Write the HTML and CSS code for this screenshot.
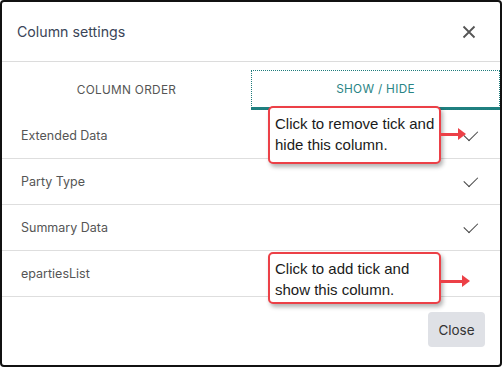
FILE: index.html
```
<!DOCTYPE html>
<html lang="en">
<head>
  <meta charset="UTF-8">
  <title>Column settings</title>
  <link rel="stylesheet" href="styles.css">
</head>
<body>
  <div class="dialog">
    <header class="dlg-head">
      <h1>Column settings</h1>
      <button class="x-btn" aria-label="Close">
        <svg width="14" height="14" viewBox="0 0 14 14"><path d="M1.5 1.5l11 11M12.5 1.5l-11 11" stroke="#555" stroke-width="1.8" fill="none"/></svg>
      </button>
    </header>

    <div class="tabs">
      <div class="tab">COLUMN ORDER</div>
      <div class="tab active">SHOW / HIDE</div>
    </div>

    <ul class="cols">
      <li>Extended Data <span class="tick"></span></li>
      <li>Party Type <span class="tick"></span></li>
      <li>Summary Data <span class="tick"></span></li>
      <li>epartiesList</li>
    </ul>

    <footer class="dlg-foot">
      <button class="close-btn">Close</button>
    </footer>

    <!-- annotation callouts -->
    <div class="callout c1">
      <p>Click to remove tick and<br>hide this column.</p>
      <span class="arrow"></span>
    </div>
    <div class="callout c2">
      <p>Click to add tick and<br>show this column.</p>
      <span class="arrow"></span>
    </div>
  </div>
</body>
</html>
```
FILE: styles.css
```
* { margin: 0; padding: 0; box-sizing: border-box; }
body { font-family: 'Inter', sans-serif; background: #fff; }

.dialog { position: relative; width: 502px; height: 367px; border: 2px solid #111; border-radius: 4px; background: #fff; display: flex; flex-direction: column; }

.dlg-head { height: 60px; border-bottom: 1px solid #dcdcdc; display: flex; align-items: center; justify-content: space-between; padding: 0 24px 0 15px; }
.dlg-head h1 { font-size: 14.2px; font-weight: 400; color: #3b4558; }
.x-btn { background: none; border: none; display: flex; cursor: pointer; }

.tabs { display: flex; padding-top: 8px; }
.tab { flex: 1; height: 40px; display: flex; align-items: center; justify-content: center; font-size: 11.8px; color: #555; letter-spacing: 0.3px; }
.tab.active { color: #2a8585; outline: 1px dotted #1e7b7b; outline-offset: -1px; border-bottom: 3px solid #1f8080; }

.cols { list-style: none; margin-top: 3px; }
.cols li { height: 46px; border-bottom: 1px solid #dedede; display: flex; align-items: center; justify-content: space-between; padding: 0 22px 0 19px; font-size: 12.5px; color: #555; }
.tick { width: 13px; height: 8px; border-left: 1.6px solid #444; border-bottom: 1.6px solid #444; transform: rotate(-45deg) translate(1px, -2px); }

.dlg-foot { display: flex; justify-content: flex-end; padding: 15px 15px 0 0; }
.close-btn { width: 57px; height: 35px; background: #dfe1e6; border: none; border-radius: 4px; font-family: 'Inter', sans-serif; font-size: 13.5px; color: #333; }

.callout { position: absolute; left: 266px; width: 173px; border: 2px solid #ec4047; border-radius: 5px; background: #fff; box-shadow: 2px 3px 4px rgba(0,0,0,0.3); padding: 3px 5px; }
.callout p { font-family: 'Liberation Sans', Arial, sans-serif; font-size: 15px; line-height: 21px; color: #1a1a1a; white-space: nowrap; }
.c1 { top: 104px; height: 58px; padding-top: 5px; }
.c2 { top: 250px; height: 52px; padding-top: 4px; }
.arrow { position: absolute; left: 171px; top: 25px; width: 18px; height: 3px; background: #ec4047; }
.arrow::after { content: ''; position: absolute; right: -7px; top: -5px; border-left: 8px solid #ec4047; border-top: 6.5px solid transparent; border-bottom: 6.5px solid transparent; }
.c2 .arrow { top: 26px; width: 22px; }
```
